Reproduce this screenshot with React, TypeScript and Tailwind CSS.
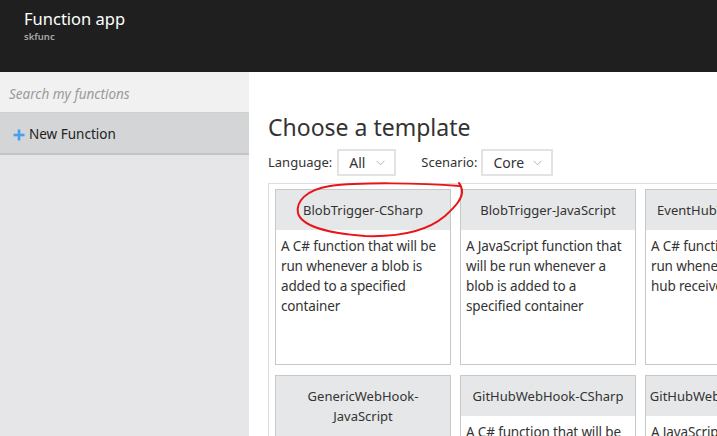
const font = { fontFamily: '"Noto Sans", "Open Sans", sans-serif' }

type Template = { title: string[]; body?: string }

const TEMPLATES: Template[] = [
  { title: ['BlobTrigger-CSharp'], body: 'A C# function that will be run whenever a blob is added to a specified container' },
  { title: ['BlobTrigger-JavaScript'], body: 'A JavaScript function that will be run whenever a blob is added to a specified container' },
  { title: ['EventHubTrigger-CSharp'], body: 'A C# function that will be run whenever an event hub receives a new event' },
  { title: ['EventHubTrigger-JavaScript'], body: 'A JavaScript function that will be run whenever an event hub receives a new event' },
  { title: ['GenericWebHook-', 'JavaScript'], body: 'A JavaScript function that will be run whenever it receives a webhook request' },
  { title: ['GitHubWebHook-CSharp'], body: 'A C# function that will be run whenever it receives a GitHub webhook' },
  { title: ['GitHubWebHook-JavaScript'], body: 'A JavaScript function that will be run whenever it receives a GitHub webhook' },
  { title: ['HttpTrigger-CSharp'], body: 'A C# function that will be run whenever it receives an HTTP request' },
]

function Chevron() {
  return (
    <svg width="9" height="6" viewBox="0 0 9 6" className="ml-auto">
      <polyline points="0.5,0.8 4.5,4.8 8.5,0.8" fill="none" stroke="#b4b4b4" strokeWidth="1" />
    </svg>
  )
}

function Select({ value, width }: { value: string; width: string }) {
  return (
    <div className={`${width} h-[27px] border-2 border-[#e3e3e3] flex items-center pl-[10px] pr-[9px] text-[14px] text-[#333]`}>
      <span>{value}</span>
      <Chevron />
    </div>
  )
}

function TemplateCard({ t }: { t: Template }) {
  return (
    <div className="w-[176px] h-[176px] border border-[#c8c8c8] bg-white flex flex-col overflow-hidden">
      <div className="bg-[#e6e7e8] py-[10px] text-center text-[13px] leading-[20px] text-[#333]">
        {t.title.map((l) => (
          <div key={l}>{l}</div>
        ))}
      </div>
      <div className="px-[5px] pt-[6px] text-[13.5px] tracking-[-0.15px] leading-[20px] text-[#333]">{t.body}</div>
    </div>
  )
}

export default function App() {
  return (
    <div className="w-[717px] h-[436px] overflow-hidden flex flex-col bg-white relative" style={font}>
      <div className="h-[72px] shrink-0 bg-[#1f1f1f] pl-[24px] pt-[7px]">
        <div className="text-[16.5px] leading-[24px] text-white">Function app</div>
        <div className="text-[9.5px] leading-[12px] font-semibold text-[#a8a8a8]">skfunc</div>
      </div>
      <div className="flex flex-1 min-h-0">
        <div className="w-[249px] shrink-0 bg-[#e6e6e8] flex flex-col">
          <div className="h-[41px] bg-[#f1f1f1] border-b border-[#cfcfcf] flex items-center pl-[9px] pt-[4px]">
            <span className="italic text-[13.5px] text-[#9a9a9a]">Search my functions</span>
          </div>
          <div className="h-[42px] bg-[#d4d5d6] border-b-2 border-[#c4c4c6] flex items-center pl-[13px] pt-[3px]">
            <svg width="12" height="12" viewBox="0 0 12 12" className="mr-[4px]">
              <rect x="4.7" y="0.5" width="2.6" height="11" fill="#4a9ef0" />
              <rect x="0.5" y="4.7" width="11" height="2.6" fill="#4a9ef0" />
            </svg>
            <span className="text-[13.5px] text-[#222]">New Function</span>
          </div>
        </div>
        <div className="flex-1 min-w-0 pl-[19px] pt-[41px] overflow-hidden">
          <div className="text-[23px] leading-[28px] text-[#333] whitespace-nowrap">Choose a template</div>
          <div className="flex items-center mt-[8px] text-[13px] text-[#333] whitespace-nowrap">
            <span className="mr-[5px]">Language:</span>
            <Select value="All" width="w-[59px]" />
            <span className="ml-[25px] mr-[4px]">Scenario:</span>
            <Select value="Core" width="w-[72px]" />
          </div>
          <div className="mt-[7px] w-[800px] border-l border-t border-[#dedede] pl-[6px] pt-[5px]">
            <div className="grid grid-cols-[repeat(4,176px)] gap-x-[9px] gap-y-[10px]">
              {TEMPLATES.map((t) => (
                <TemplateCard key={t.title.join('')} t={t} />
              ))}
            </div>
          </div>
        </div>
      </div>
      <svg className="absolute left-0 top-0 pointer-events-none" width="717" height="436" viewBox="0 0 717 436">
        <path
          d="M460 186 C 420 183, 360 182, 330 186 C 305 190, 296 202, 298 213 C 301 225, 325 233, 365 236 C 395 237, 425 233, 445 216 C 456 206, 463 198, 462 190 C 461 186, 460 184, 459 183"
          fill="none"
          stroke="#e8141a"
          strokeWidth="2"
          strokeLinecap="round"
        />
      </svg>
    </div>
  )
}
